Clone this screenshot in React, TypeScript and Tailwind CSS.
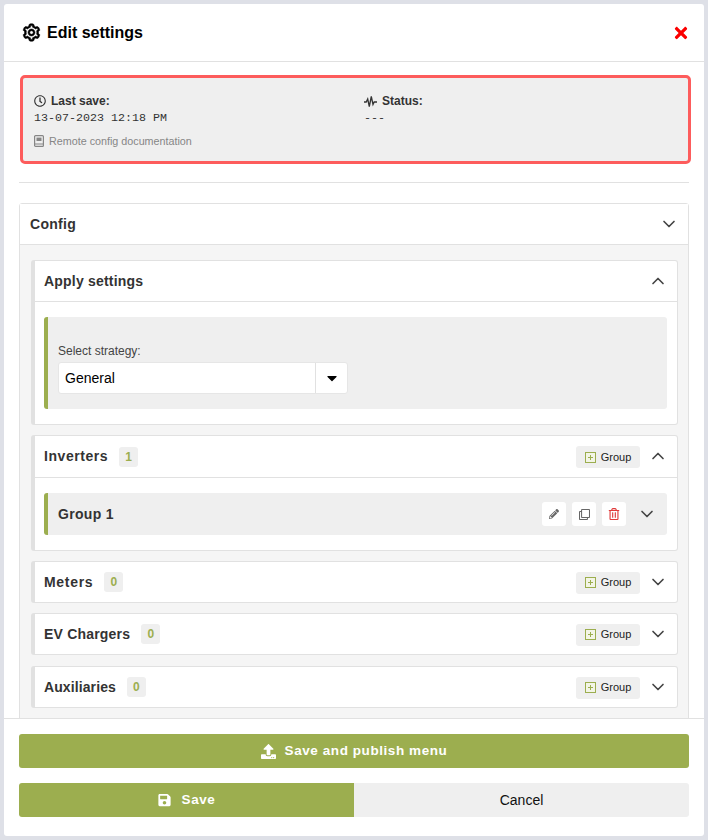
import React from "react";
import { FaRegClock, FaTimes, FaCaretDown, FaUpload, FaSave, FaPencilAlt, FaRegClone, FaRegTrashAlt } from "react-icons/fa";
import { BiCog } from "react-icons/bi";
import { LuChevronDown, LuChevronUp } from "react-icons/lu";

const heading = "font-bold text-[#333] text-[14px]";

function GroupButton() {
  return (
    <div className="mt-[1px] h-[22px] w-[64px] rounded-[3px] bg-[#efefef] flex items-center justify-center gap-[5px] text-[11px] text-[#222]">
      <svg viewBox="0 0 11 11" className="w-[11px] h-[11px] shrink-0" fill="none" stroke="#9cae4f">
        <rect x="0.5" y="0.5" width="10" height="10" strokeWidth="1" fill="#f3f5e6" />
        <path d="M5.5 3v5M3 5.5h5" strokeWidth="1" />
      </svg>
      <span>Group</span>
    </div>
  );
}

function Chevron({ up }: { up?: boolean }) {
  const Icon = up ? LuChevronUp : LuChevronDown;
  return <Icon className="w-[20px] h-[20px] -m-[1.5px] text-[#444]" strokeWidth={2} />;
}

function Count({ n }: { n: number }) {
  return (
    <span className="ml-[11px] w-[19px] h-[20px] rounded-[3px] bg-[#efefef] flex items-center justify-center text-[12px] font-bold text-[#9cae4f]">
      {n}
    </span>
  );
}

function Section({ title, n, children, h = "h-[40px]", up, track = "tracking-[0.3px]", offset = "" }: { title: string; n: number; children?: React.ReactNode; h?: string; up?: boolean; track?: string; offset?: string }) {
  return (
    <div className={`${offset} bg-white rounded-[3px] border border-[#e1e1e1] border-l-[4px]`}>
      <div className={`${h} flex items-center pl-[9px] pr-[11px]`}>
        <span className={`${heading} ${track}`}>{title}</span>
        <Count n={n} />
        <div className="ml-auto flex items-center gap-[9px]">
          <GroupButton />
          <span className="flex -mt-[1px]"><Chevron up={up} /></span>
        </div>
      </div>
      {children}
    </div>
  );
}

function IconBtn({ children }: { children: React.ReactNode }) {
  return <div className="w-[24px] h-[24px] rounded-[3px] bg-white flex items-center justify-center">{children}</div>;
}

export default function App() {
  return (
    <div className="w-[708px] h-[840px] bg-[#dee0e7] p-[4px] font-['Liberation_Sans',sans-serif] overflow-hidden">
      <div className="w-[700px] h-[832px] bg-white rounded-[3px] flex flex-col overflow-hidden">
        <header className="h-[58px] shrink-0 border-b border-[#e1e1e1] flex items-center pl-[17px] pr-[14px]">
          <BiCog className="w-[21px] h-[21px] text-black" stroke="currentColor" strokeWidth={0.6} />
          <h1 className="ml-[5px] font-bold text-[16px] text-black">Edit settings</h1>
          <FaTimes className="ml-auto w-[18px] h-[18px] text-[#fb0000]" />
        </header>

        <main className="flex-1 min-h-0 overflow-hidden pl-[15px] pr-[15px] pt-[13px]">
          <div className="ml-[1px] -mr-[2px] h-[89px] rounded-[5px] border-[3px] border-[#fd5c5c] bg-[#efefef] pl-[11px] pt-[15px] flex">
            <div className="w-[330px]">
              <div className="flex items-center gap-[5px] text-[12px] font-bold text-[#333] leading-[16px]">
                <FaRegClock className="w-[12px] h-[12px]" />
                Last save:
              </div>
              <div className="mt-[1px] font-['Liberation_Mono',monospace] text-[11.67px] leading-[16px] text-[#333]">13-07-2023 12:18 PM</div>
              <div className="mt-[7px] flex items-center gap-[5px] text-[10.75px] text-[#868686] leading-[16px]">
                <svg viewBox="0 0 10 12" className="w-[10px] h-[12px] shrink-0" fill="none" stroke="#868686" strokeWidth="1.2">
                  <rect x="0.6" y="0.6" width="8.8" height="10.8" rx="1" />
                  <path d="M0.6 9h8.8" />
                  <rect x="2.5" y="2.6" width="5" height="3.4" fill="#868686" stroke="none" />
                </svg>
                Remote config documentation
              </div>
            </div>
            <div>
              <div className="flex items-center gap-[5px] text-[12px] font-bold text-[#333] leading-[16px]">
                <svg viewBox="0 0 13 13" className="w-[13px] h-[13px] shrink-0" fill="none" stroke="#333" strokeWidth="1.3" strokeLinejoin="miter">
                  <path d="M0 7h2.2l1.5-3 1.6 7.5 2-10 1.7 8 1.2-2.5H13" />
                </svg>
                Status:
              </div>
              <div className="mt-[1px] font-['Liberation_Mono',monospace] text-[11.67px] leading-[16px] text-[#333]">---</div>
            </div>
          </div>

          <div className="mt-[18px] border-t border-[#e1e1e1]" />

          <div className="mt-[20px] rounded-[3px] border border-[#e1e1e1] bg-[#f5f5f5]">
            <div className="h-[41px] bg-white border-b border-[#e1e1e1] flex items-center pl-[10px] pr-[11px] justify-between">
              <span className={`${heading} tracking-[0.3px]`}>Config</span>
              <Chevron />
            </div>
            <div className="pl-[11px] pr-[10px] pt-[15px] pb-[15px] flex flex-col gap-[10px]">
              <div className="bg-white rounded-[3px] border border-[#e1e1e1] border-l-[4px]">
                <div className="h-[41px] border-b border-[#e1e1e1] flex items-center pl-[9px] pr-[11px] justify-between">
                  <span className={`${heading} tracking-[0.2px]`}>Apply settings</span>
                  <Chevron up />
                </div>
                <div className="pt-[15px] pb-[15px] pl-[9px] pr-[10px]">
                  <div className="h-[92px] rounded-[3px] bg-[#efefef] border-l-[4px] border-[#9cae4f] pl-[10px] pt-[27px]">
                    <div className="text-[12px] text-[#444] leading-[14px]">Select strategy:</div>
                    <div className="mt-[4px] w-[290px] h-[32px] bg-white rounded-[3px] border border-[#e6e6e6] flex items-center text-[14px] text-black">
                      <span className="flex-1 pl-[6px]">General</span>
                      <span className="w-[32px] h-full border-l border-[#e1e1e1] flex items-center justify-center">
                        <FaCaretDown className="w-[16px] h-[16px] text-black" />
                      </span>
                    </div>
                  </div>
                </div>
              </div>

              <Section title="Inverters" n={1} h="h-[41px]" up track="tracking-[0.55px]">
                <div className="border-t border-[#e1e1e1] pt-[15px] pb-[15px] pl-[9px] pr-[10px]">
                  <div className="h-[42px] rounded-[3px] bg-[#efefef] border-l-[4px] border-[#9cae4f] pl-[10px] pr-[12px] flex items-center">
                    <span className={`${heading} tracking-[0.3px]`}>Group 1</span>
                    <div className="ml-auto flex items-center gap-[6px]">
                      <IconBtn><FaPencilAlt className="w-[10px] h-[10px] text-[#666]" /></IconBtn>
                      <IconBtn><FaRegClone className="w-[11px] h-[11px] text-[#666]" /></IconBtn>
                      <IconBtn><FaRegTrashAlt className="w-[12px] h-[12px] text-[#e03a3a]" /></IconBtn>
                      <span className="ml-[6px] flex"><Chevron /></span>
                    </div>
                  </div>
                </div>
              </Section>
              <Section title="Meters" n={0} track="tracking-[0.7px]" />
              <Section title="EV Chargers" n={0} track="tracking-[0.2px]" />
              <Section title="Auxiliaries" n={0} track="tracking-[0.1px]" offset="mt-[1px]" />
            </div>
          </div>
        </main>

        <footer className="h-[118px] shrink-0 border-t border-[#e1e1e1] px-[15px] pt-[15px]">
          <div className="h-[34px] rounded-[3px] bg-[#9cae4f] flex items-center justify-center gap-[9px] text-white font-bold text-[13.5px] tracking-[0.57px]">
            <FaUpload className="w-[15px] h-[15px]" />
            Save and publish menu
          </div>
          <div className="mt-[15px] flex h-[34px] rounded-[3px] overflow-hidden">
            <div className="w-[335px] bg-[#9cae4f] flex items-center justify-center gap-[11px] text-white font-bold text-[13.5px] tracking-[0.57px]">
              <FaSave className="w-[13px] h-[14px]" />
              Save
            </div>
            <div className="flex-1 bg-[#efefef] flex items-center justify-center text-[14px] text-[#111]">Cancel</div>
          </div>
        </footer>
      </div>
    </div>
  );
}
